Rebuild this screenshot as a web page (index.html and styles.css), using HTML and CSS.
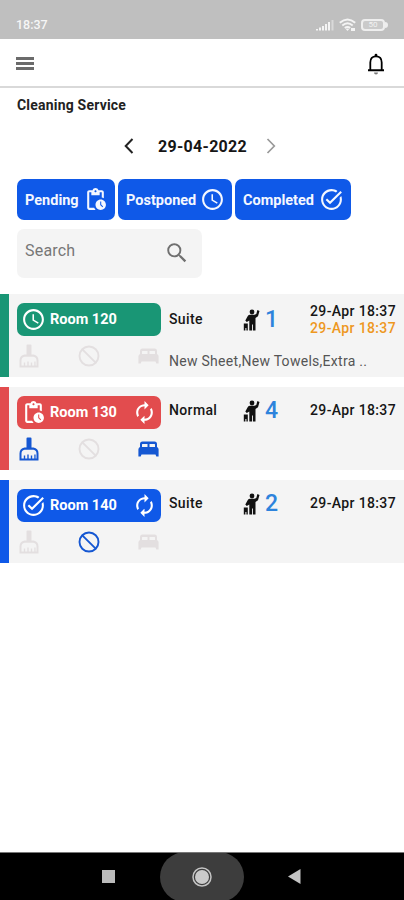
FILE: index.html
```
<!DOCTYPE html>
<html lang="en">
<head>
<meta charset="utf-8">
<title>Cleaning Service</title>
<link rel="stylesheet" href="styles.css">
</head>
<body>
<svg class="defs" aria-hidden="true">
  <symbol id="pending" viewBox="0 0 24 24"><path d="M17 12c-2.76 0-5 2.24-5 5s2.24 5 5 5 5-2.24 5-5-2.24-5-5-5zm1.65 7.35L16.5 17.2V14h1v2.79l1.85 1.85-.7.71zM18 3h-3.18C14.4 1.84 13.3 1 12 1s-2.4.84-2.82 2H6c-1.1 0-2 .9-2 2v15c0 1.1.9 2 2 2h6.11c-.59-.57-1.07-1.25-1.42-2H6V5h2v3h8V5h2v5.08c.71.1 1.38.31 2 .6V5c0-1.1-.9-2-2-2zm-6 2c-.55 0-1-.45-1-1s.45-1 1-1 1 .45 1 1-.45 1-1 1z"/></symbol>
  <symbol id="clock" viewBox="0 0 24 24"><path d="M11.99 2C6.47 2 2 6.48 2 12s4.47 10 9.99 10C17.52 22 22 17.52 22 12S17.52 2 11.99 2zM12 20c-4.42 0-8-3.58-8-8s3.58-8 8-8 8 3.58 8 8-3.58 8-8 8zm.5-13H11v6l5.25 3.15.75-1.23-4.5-2.67z"/></symbol>
  <symbol id="done" viewBox="0 0 24 24"><path d="M22 5.18L10.59 16.6l-4.24-4.24 1.41-1.41 2.83 2.83 10-10L22 5.18zm-2.21 5.04c.13.57.21 1.17.21 1.78 0 4.42-3.58 8-8 8s-8-3.58-8-8 3.58-8 8-8c1.58 0 3.04.46 4.28 1.25l1.44-1.44C16.1 2.67 14.13 2 12 2 6.48 2 2 6.48 2 12s4.48 10 10 10 10-4.48 10-10c0-1.19-.22-2.33-.6-3.39l-1.61 1.61z"/></symbol>
  <symbol id="renew" viewBox="0 0 24 24"><path d="M12 6v3l4-4-4-4v3c-4.42 0-8 3.58-8 8 0 1.57.46 3.03 1.24 4.26L6.7 14.8c-.45-.83-.7-1.79-.7-2.8 0-3.31 2.69-6 6-6zm6.76 1.74L17.3 9.2c.44.84.7 1.79.7 2.8 0 3.31-2.69 6-6 6v-3l-4 4 4 4v-3c4.42 0 8-3.58 8-8 0-1.57-.46-3.03-1.24-4.26z"/></symbol>
  <symbol id="search" viewBox="0 0 24 24"><path d="M15.500 14h-.79l-.28-.27A6.470 6.470 0 0 0 16 9.500 6.500 6.500 0 1 0 9.500 16c1.610 0 3.090-.59 4.230-1.570l.27.28v.79l5 4.990L20.490 19l-4.990-5zm-6 .2C6.900 14.200 4.800 12.100 4.800 9.500S6.900 4.800 9.500 4.800 14.200 6.900 14.200 9.500 12.100 14.200 9.500 14.200z"/></symbol>
  <symbol id="block" viewBox="0 0 22 22"><circle cx="11" cy="11" r="9.5" fill="none" stroke="currentColor" stroke-width="1.9"/><path d="M4.3 4.3L17.7 17.7" stroke="currentColor" stroke-width="1.9"/></symbol>
  <symbol id="broom" viewBox="0 0 20 24"><path fill-rule="evenodd" d="M7.500 1.500Q7.500.5 8.500.5h3Q12.500.5 12.500 1.500V10.500H14.500Q19.500 11.500 19.500 16.500V23.500H.5V16.500Q.5 11.500 5.500 10.500H7.500zM5.500 12.800Q2.500 13.500 2.500 16.500V21.600H4.800V18.500H6.200V21.600H8.300V17.500H9.700V21.600H11.800V18.500H13.200V21.600H15.300V17.500H16.600V21.600H17.500V16.500Q17.500 13.500 14.500 12.800z"/></symbol>
  <symbol id="bed" viewBox="0 0 21 16"><path fill-rule="evenodd" d="M2 6V3Q2 .5 4.500.5h12Q19 .5 19 3v3q1.600.5 1.600 2.500V15.500H18.300L17.500 13.500H3.500L2.700 15.500H.4V8.500Q.4 6.500 2 6zM4 6H9.500V3H4.500Q4 3 4 3.600zM11.500 6H17V3.600Q17 3 16.500 3H11.500z"/></symbol>
  <symbol id="guest" viewBox="0 0 17 22"><circle cx="9" cy="3" r="2.400"/><path d="M14.400 1L16.500 1.900 15 7.200 12.500 8.900V21.500H9.900V15.500H9V21.500H6.300V11.500L3.800 13 2.300 11.400 4.800 7Q5.600 5.800 7 5.800H11.500L13.300 5z"/><path d="M.8 14.500H4.800V21.500H3.400V19H2.400V21.500H.8z"/></symbol>
</svg>

<header class="status">
  <span class="status-time">18:37</span>
  <svg class="signal" viewBox="0 0 18 12"><path fill="#f4f4f4" d="M0 10h2v1.500H0zM3 8.500h2v3H3zM6 7h2v4.500H6zM9 5h2v6.500H9zM12 3h2v8.500h-2z"/><path fill="#d9d9d9" d="M15.500 1h2v10.500h-2z"/></svg>
  <svg class="wifi" viewBox="0 0 18 14"><g fill="none" stroke="#f4f4f4" stroke-width="1.900"><path d="M.8 4.800Q8.500-2 16.200 4.800M3.300 7.500Q8.500 3 13.700 7.500M5.800 10Q8.500 7.800 11.200 10"/></g><path fill="#f4f4f4" d="M6.800 11Q8.500 9.800 10.200 11L8.500 13zM12 10h4v3h-4z"/></svg>
  <span class="battery">50</span><i class="battery-tip"></i>
</header>

<nav class="appbar">
  <span class="menu"><i></i><i></i><i></i></span>
  <svg class="bell" viewBox="0 0 18 22"><path d="M3.300 17V9.500Q3.300 3.300 9 3.300T14.700 9.500V17" fill="none" stroke="#000" stroke-width="1.800"/><path d="M7.600 3.500V2.200a1.400 1.400 0 0 1 2.800 0v1.300zM1 16.200h16v2H1z"/><path d="M7 19.500h4a2 2 0 0 1-4 0z" fill="#777"/></svg>
</nav>

<main>
  <h1>Cleaning Service</h1>
  <div class="datebar">
    <svg class="chev" viewBox="0 0 10 16"><path d="M8.500 1L1.700 8l6.800 7"/></svg>
    <span class="date">29-04-2022</span>
    <svg class="chev next" viewBox="0 0 10 16"><path d="M1.500 1l6.800 7-6.800 7"/></svg>
  </div>
  <div class="filters">
    <button class="f1"><span>Pending</span><svg><use href="#pending"/></svg></button>
    <button class="f2"><span>Postponed</span><svg><use href="#clock"/></svg></button>
    <button class="f3"><span>Completed</span><svg><use href="#done"/></svg></button>
  </div>
  <div class="search"><span>Search</span><svg><use href="#search"/></svg></div>

  <section class="rooms">
    <article class="room green">
      <div class="left">
        <div class="badge"><svg><use href="#clock"/></svg><span>Room 120</span></div>
        <div class="tasks"><svg class="broom"><use href="#broom"/></svg><svg class="block"><use href="#block"/></svg><svg class="bed"><use href="#bed"/></svg></div>
      </div>
      <div class="right">
        <div class="info tall"><span class="type">Suite</span><svg class="guest"><use href="#guest"/></svg><span class="count">1</span><span class="times"><span>29-Apr 18:37</span><span class="late">29-Apr 18:37</span></span></div>
        <p class="note">New Sheet,New Towels,Extra ..</p>
      </div>
    </article>
    <article class="room red">
      <div class="left">
        <div class="badge"><svg><use href="#pending"/></svg><span>Room 130</span><svg class="renew"><use href="#renew"/></svg></div>
        <div class="tasks"><svg class="broom on"><use href="#broom"/></svg><svg class="block"><use href="#block"/></svg><svg class="bed on"><use href="#bed"/></svg></div>
      </div>
      <div class="right">
        <div class="info"><span class="type">Normal</span><svg class="guest"><use href="#guest"/></svg><span class="count">4</span><span class="times"><span>29-Apr 18:37</span></span></div>
      </div>
    </article>
    <article class="room blue">
      <div class="left">
        <div class="badge"><svg><use href="#done"/></svg><span>Room 140</span><svg class="renew"><use href="#renew"/></svg></div>
        <div class="tasks"><svg class="broom"><use href="#broom"/></svg><svg class="block on"><use href="#block"/></svg><svg class="bed"><use href="#bed"/></svg></div>
      </div>
      <div class="right">
        <div class="info"><span class="type">Suite</span><svg class="guest"><use href="#guest"/></svg><span class="count">2</span><span class="times"><span>29-Apr 18:37</span></span></div>
      </div>
    </article>
  </section>
</main>

<footer class="sysnav">
  <span class="recent"></span>
  <span class="home"><svg viewBox="0 0 20 20"><circle cx="10" cy="10" r="9" fill="none" stroke="#c4c4c4" stroke-width="1.500"/><circle cx="10" cy="10" r="7" fill="#cacaca"/></svg></span>
  <svg class="back" viewBox="0 0 13 15"><path d="M0 7.500L12.500 0v15z"/></svg>
</footer>
</body>
</html>
```
FILE: styles.css
```
* { box-sizing: border-box; }
body { margin: 0; width: 404px; height: 900px; display: flex; flex-direction: column; overflow: hidden; background: #fff; color: #161616; font-family: Roboto, "Liberation Sans", sans-serif; }
svg { display: block; flex: none; fill: currentColor; }
.defs { display: none; }

.status { height: 39px; flex: none; background: #bfbfbf; display: flex; align-items: center; padding: 10px 16px 0 16px; color: #f6f6f6; }
.status-time { font-size: 12.5px; font-weight: 500; line-height: 16px; margin-right: auto; }
.signal { width: 18px; height: 12px; }
.wifi { width: 18px; height: 14px; margin: 0 4px 0 5px; }
.battery { width: 24px; height: 12px; border: 2px solid #eee; border-radius: 4px; font-size: 8px; line-height: 8px; text-align: center; color: #f2f2f2; background: #cacaca; }
.battery-tip { width: 3px; height: 6px; background: #eee; border-radius: 0 3px 3px 0; }

.appbar { height: 49px; flex: none; border-bottom: 2px solid #d9d9d9; display: flex; justify-content: space-between; align-items: center; padding: 2px 19px 0 16px; }
.menu { display: flex; flex-direction: column; gap: 2px; width: 18px; }
.menu i { height: 3px; background: #6b6b6b; }
.bell { width: 18px; height: 22px; color: #000; }

main { flex: 1; display: flex; flex-direction: column; }
h1 { margin: 9px 0 0 17px; font-size: 14px; line-height: 16px; font-weight: 700; letter-spacing: .2px; color: #222; }
.datebar { display: flex; align-items: center; margin: 23px 0 0 124px; height: 20px; }
.chev { width: 10px; height: 16px; fill: none; stroke: #222; stroke-width: 2; }
.chev.next { stroke: #999; stroke-width: 1.700; }
.date { width: 88px; margin: 0 20px 0 24px; font-size: 16px; font-weight: 700; letter-spacing: .3px; white-space: nowrap; }

.filters { display: flex; gap: 3px; margin: 23px 0 0 17px; }
.filters button { height: 41px; border: 0; border-radius: 7px; background: #0f59e8; color: #f4f7ff; display: flex; align-items: center; justify-content: space-between; padding: 0 7px 0 8px; font: 700 14.500px/18px Roboto, sans-serif; }
.filters span { padding-top: 2px; }
.filters svg { width: 25px; height: 25px; }
.filters .f1 { width: 98px; }
.filters .f2 { width: 114px; }
.filters .f3 { width: 116px; }
.search { width: 185px; height: 49px; margin: 9px 0 0 17px; border-radius: 7px; background: #f4f4f4; display: flex; align-items: center; justify-content: space-between; padding: 0 12px 6px 8px; font-size: 16px; letter-spacing: .2px; color: #777; }
.search svg { width: 26px; height: 26px; margin-top: 4px; color: #707070; }

.rooms { display: flex; flex-direction: column; gap: 10px; margin-top: 16px; }
.room { height: 83px; display: flex; background: #f4f4f4; border-left: 9px solid; padding: 9px 8px 0 8px; }
.green { border-color: #199675; }
.red { border-color: #e24c4e; }
.blue { border-color: #0f59e8; }
.left { width: 144px; flex: none; }
.badge { height: 33px; border-radius: 7px; display: flex; align-items: center; padding: 0 4px 0 4px; color: #fff; font-size: 14.500px; font-weight: 700; }
.green .badge { background: #199675; }
.red .badge { background: #e24c4e; }
.blue .badge { background: #0f59e8; }
.badge svg { width: 25px; height: 25px; margin-right: 4px; }
.badge .renew { margin: 0 0 0 auto; }
.tasks { display: flex; align-items: center; justify-content: space-between; margin-top: 8px; padding: 0 2px 0 2px; height: 24px; color: #e3dfe0; }
.tasks .on { color: #1557d2; }
.broom { width: 20px; height: 24px; }
.block { width: 22px; height: 22px; }
.bed { width: 21px; height: 16px; }
.right { flex: 1; min-width: 0; padding-left: 8px; }
.info { height: 29px; display: flex; align-items: center; font-size: 14px; font-weight: 500; letter-spacing: .36px; white-space: nowrap; }
.info.tall { height: 33px; }
.type { width: 74px; padding-bottom: 1px; }
.guest { width: 17px; height: 22px; color: #111; }
.count { width: 17px; margin-left: 5px; font-size: 23px; line-height: 28px; font-weight: 500; letter-spacing: 0; color: #2d83dc; }
.times { margin-left: auto; display: flex; flex-direction: column; text-align: right; line-height: 16.500px; }
.late { color: #ee981f; }
.note { margin: 16px 0 0; font-size: 14px; line-height: 18px; letter-spacing: .28px; color: #555; white-space: nowrap; }

.sysnav { height: 48px; flex: none; background: #000; border-top: 1px solid #777; display: flex; align-items: center; overflow: hidden; }
.recent { width: 13px; height: 13px; margin-left: 102px; background: #bbb; }
.home { width: 84px; height: 50px; margin-left: 45px; border-radius: 25px; background: #3d3d3d; display: flex; align-items: center; justify-content: center; }
.home svg { width: 20px; height: 20px; }
.back { width: 13px; height: 15px; margin-left: 44px; color: #c4c4c4; }
```
